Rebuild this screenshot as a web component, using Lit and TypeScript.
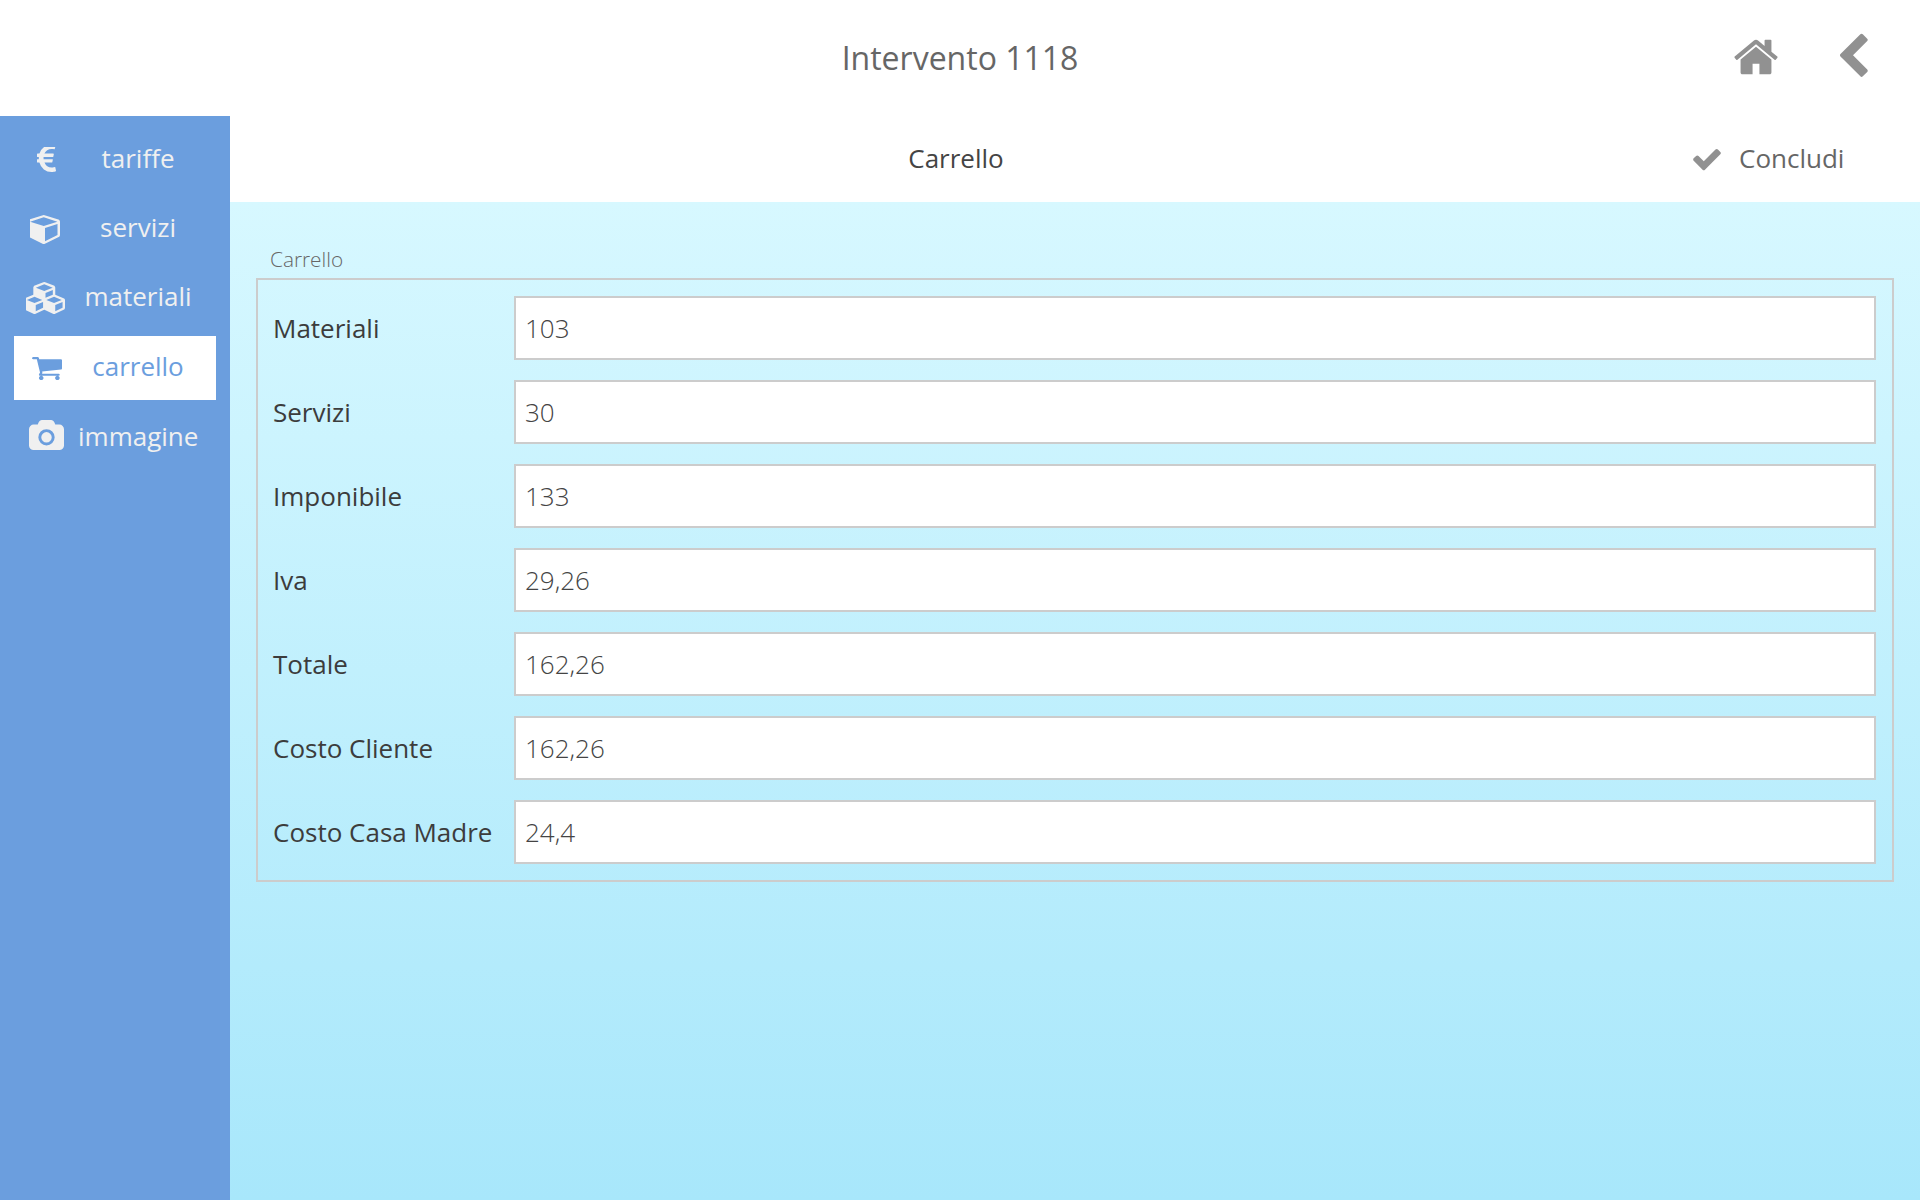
import { LitElement, html, css, svg } from "lit";
import { customElement } from "lit/decorators.js";

const ICONS: Record<string, { vb: string; d: string; par?: string }> = {
  euro: { vb: "384 256 1011 1280", par: "none", d: "M1360 1307l35 159q3 12-3 22.5t-17 14.5l-5 1q-4 2-10.5 3.5t-16 4.5-21.5 5.5-25.5 5-30 5-33.5 4.5-36.5 3-38.5 1q-234 0-409-130.5t-238-351.5h-95q-13 0-22.5-9.5t-9.5-22.5v-113q0-13 9.5-22.5t22.5-9.5h66q-2-57 1-105h-67q-14 0-23-9t-9-23v-114q0-14 9-23t23-9h98q67-210 243.5-338t400.5-128q102 0 194 23 11 3 20 15 6 11 3 24l-43 159q-3 13-14 19.5t-24 2.5l-4-1q-4-1-11.5-2.5l-17.5-3.5-22.5-3.5-26-3-29-2.5-29.5-1q-126 0-226 64t-150 176h468q16 0 25 12 10 12 7 26l-24 114q-5 26-32 26h-488q-3 47 0 105h459q15 0 25 12 9 12 6 27l-24 112q-2 11-11 18.5t-20 7.5h-387q48 117 149.5 185.5t228.5 68.5q18 0 36-1.5t33.5-3.5 29.5-4.5 24.5-5 18.5-4.5l12-3 5-2q13-5 26 2 12 7 15 21z" },
  cube: { vb: "128 128 1536 1664", par: "none", d: "M896 1629l640-349v-636l-640 233v752zm-64-865l698-254-698-254-698 254zm832-252v768q0 35-18 65t-49 47l-704 384q-28 16-61 16t-61-16l-704-384q-31-17-49-47t-18-65v-768q0-40 23-73t61-47l704-256q22-8 44-8t44 8l704 256q38 14 61 47t23 73z" },
  cubes: { vb: "128 0 2048 1792", par: "none", d: "M640 1632l384-192v-314l-384 164v342zm-64-454l404-173-404-173-404 173zm1088 454l384-192v-314l-384 164v342zm-64-454l404-173-404-173-404 173zm-448-293l384-165v-266l-384 164v267zm-64-379l441-189-441-189-441 189zm1088 518v416q0 36-19 67t-52 47l-448 224q-25 14-57 14t-57-14l-448-224q-4-2-7-4-2 2-7 4l-448 224q-25 14-57 14t-57-14l-448-224q-33-16-52-47t-19-67v-416q0-38 21.5-70t56.5-48l434-186v-400q0-38 21.5-70t56.5-48l448-192q23-10 50-10t50 10l448 192q35 16 56.5 48t21.5 70v400l434 186q36 16 57 48t21 70z" },
  cart: { vb: "64 128 1664 1536", par: "none", d: "M704 1536q0 52-38 90t-90 38-90-38-38-90 38-90 90-38 90 38 38 90zm896 0q0 52-38 90t-90 38-90-38-38-90 38-90 90-38 90 38 38 90zm128-1088v512q0 24-16.5 42.5t-40.5 21.5l-1044 122q13 60 13 70 0 16-24 64h920q26 0 45 19t19 45-19 45-45 19h-1024q-26 0-45-19t-19-45q0-11 8-31.5t16-36 21.5-40 15.5-29.5l-177-823h-204q-26 0-45-19t-19-45 19-45 45-19h256q16 0 28.5 6.5t19.5 15.5 13 24.5 8 26 5.5 29.5 4.5 26h1201q26 0 45 19t19 45z" },
  camera: { vb: "0 0 1920 1664", par: "none", d: "M960 672q119 0 203.5 84.5t84.5 203.5-84.5 203.5-203.5 84.5-203.5-84.5-84.5-203.5 84.5-203.5 203.5-84.5zm704-416q106 0 181 75t75 181v896q0 106-75 181t-181 75h-1408q-106 0-181-75t-75-181v-896q0-106 75-181t181-75h224l51-136q19-49 69.5-84.5t103.5-35.5h512q53 0 103.5 35.5t69.5 84.5l51 136h224zm-704 1152q185 0 316.5-131.5t131.5-316.5-131.5-316.5-316.5-131.5-316.5 131.5-131.5 316.5 131.5 316.5 316.5 131.5z" },
  home: { vb: "0 0 1792 1792", d: "M1472 992v480q0 26-19 45t-45 19h-384v-384h-256v384h-384q-26 0-45-19t-19-45v-480q0-1 .5-3t.5-3l575-474 575 474q1 2 1 6zm223-69l-62 74q-8 9-21 11h-3q-13 0-21-7l-692-577-692 577q-12 8-24 7-13-2-21-11l-62-74q-8-10-7-23.5t11-21.5l719-599q32-26 76-26t76 26l244 204v-195q0-14 9-23t23-9h192q14 0 23 9t9 23v408l219 182q10 8 11 21.5t-7 23.5z" },
  chevron: { vb: "0 0 1792 1792", d: "M1427 301l-531 531 531 531q19 19 19 45t-19 45l-166 166q-19 19-45 19t-45-19l-742-742q-19-19-19-45t19-45l742-742q19-19 45-19t45 19l166 166q19 19 19 45t-19 45z" },
  check: { vb: "0 0 1792 1792", d: "M1671 566q0 40-28 68l-724 724-136 136q-28 28-68 28t-68-28l-136-136-362-362q-28-28-28-68t28-68l136-136q28-28 68-28t68 28l294 295 656-657q28-28 68-28t68 28l136 136q28 28 28 68z" },
};

const icon = (name: string, cls: string) => {
  const i = ICONS[name];
  return html`<svg class=${cls} viewBox=${i.vb} preserveAspectRatio=${i.par ?? "xMidYMid meet"} fill="currentColor" aria-hidden="true">${svg`<path d=${i.d}></path>`}</svg>`;
};

const NAV = [
  { i: "euro", t: "tariffe", cls: "s-euro", lift: 0 },
  { i: "cube", t: "servizi", cls: "s-cube", lift: 2 },
  { i: "cubes", t: "materiali", cls: "s-cubes", lift: 4 },
  { i: "cart", t: "carrello", cls: "s-cart", lift: 4, active: true },
  { i: "camera", t: "immagine", cls: "s-camera", lift: 4 },
];

const ROWS = [
  ["Materiali", "103"],
  ["Servizi", "30"],
  ["Imponibile", "133"],
  ["Iva", "29,26"],
  ["Totale", "162,26"],
  ["Costo Cliente", "162,26"],
  ["Costo Casa Madre", "24,4"],
];

@customElement("app-root")
export class AppRoot extends LitElement {
  static styles = css`
    :host {
      display: flex;
      flex-direction: column;
      width: 1920px;
      height: 1200px;
      font-family: "Open Sans", "Liberation Sans", sans-serif;
      background: #fff;
      overflow: hidden;
    }
    .header {
      height: 116px;
      flex: none;
      display: grid;
      grid-template-columns: 1fr auto 1fr;
      align-items: center;
    }
    .title {
      grid-column: 2;
      font-size: 32px;
      color: #666;
      padding-bottom: 2px;
    }
    .tools {
      grid-column: 3;
      justify-self: end;
      display: flex;
      align-items: center;
      gap: 49px;
      padding-right: 43px;
      color: #919191;
      margin-top: -2px;
    }
    .tools svg { display: block; width: 48px; height: 48px; }
    .body { flex: 1; display: flex; min-height: 0; }
    .side {
      width: 230px;
      flex: none;
      background: #6b9ede;
      padding-top: 10px;
      display: flex;
      flex-direction: column;
      gap: 6px;
      box-sizing: border-box;
    }
    .nav {
      margin: 0 14px;
      height: 64px;
      display: flex;
      align-items: center;
      color: #f0f0f0;
      font-size: 26px;
      font-weight: 400;
    }
    .nav.active { background: #fff; color: #6b9ede; }
    .nav .ic { width: 64px; flex: none; display: flex; justify-content: center; align-items: center; height: 64px; }
    .nav .ic svg { display: block; }
    .s-euro { width: 19px; height: 25px; margin-top: 3px; }
    .s-cube { width: 30px; height: 29px; margin: 3px 2px 0 0; }
    .s-cubes { width: 39px; height: 32px; margin-right: 1px; }
    .s-cart { width: 30px; height: 25px; margin: 0 0 1px 2px; }
    .s-camera { width: 35px; height: 30px; margin: 0 0 6px 1px; }
    .nav .lbl { flex: 1; text-align: center; padding-right: 18px; white-space: nowrap; }
    .main { flex: 1; display: flex; flex-direction: column; min-width: 0; }
    .sub {
      height: 86px;
      flex: none;
      display: flex;
      align-items: center;
    }
    .sub-title {
      flex: 1;
      text-align: center;
      font-size: 26px;
      color: #444;
      padding-bottom: 2px;
    }
    .done {
      width: 238px;
      box-sizing: border-box;
      padding-left: 9px;
      display: flex;
      align-items: center;
      gap: 16px;
      font-size: 26px;
      color: #666;
    }
    .done span { padding-bottom: 2px; }
    .done svg { width: 32px; height: 32px; color: #919191; display: block; }
    .content {
      flex: 1;
      background: linear-gradient(#d7f8ff, #a8e7fb);
      padding: 42px 26px 0 26px;
    }
    .legend {
      font-size: 20.8px;
      font-weight: 300;
      color: #666;
      line-height: 30px;
      padding: 0 0 4px 14px;
    }
    .box {
      border: 2px solid #ccc;
      padding: 16px 16px 16px 15px;
      display: flex;
      flex-direction: column;
      gap: 20px;
    }
    .row { display: flex; align-items: center; height: 64px; }
    .row label {
      width: 241px;
      flex: none;
      font-size: 26px;
      color: #3c3c3c;
      white-space: nowrap;
    }
    .row input {
      flex: 1;
      min-width: 0;
      height: 64px;
      box-sizing: border-box;
      border: 2px solid #ccc;
      border-radius: 0;
      background: #fff;
      padding: 0 9px;
      font: 300 26px "Open Sans", "Liberation Sans", sans-serif;
      color: #444;
      outline: none;
    }
  `;

  render() {
    return html`
      <div class="header">
        <div class="title">Intervento 1118</div>
        <div class="tools">${icon("home", "")}${icon("chevron", "")}</div>
      </div>
      <div class="body">
        <nav class="side">
          ${NAV.map(
            (n) => html`<div class="nav ${n.active ? "active" : ""}">
              <span class="ic">${icon(n.i, n.cls)}</span>
              <span class="lbl" style="padding-bottom:${n.lift}px">${n.t}</span>
            </div>`
          )}
        </nav>
        <div class="main">
          <div class="sub">
            <div class="sub-title">Carrello</div>
            <div class="done">${icon("check", "")}<span>Concludi</span></div>
          </div>
          <div class="content">
            <div class="legend">Carrello</div>
            <div class="box">
              ${ROWS.map(
                ([l, v]) => html`<div class="row">
                  <label>${l}</label>
                  <input readonly .value=${v} />
                </div>`
              )}
            </div>
          </div>
        </div>
      </div>
    `;
  }
}
